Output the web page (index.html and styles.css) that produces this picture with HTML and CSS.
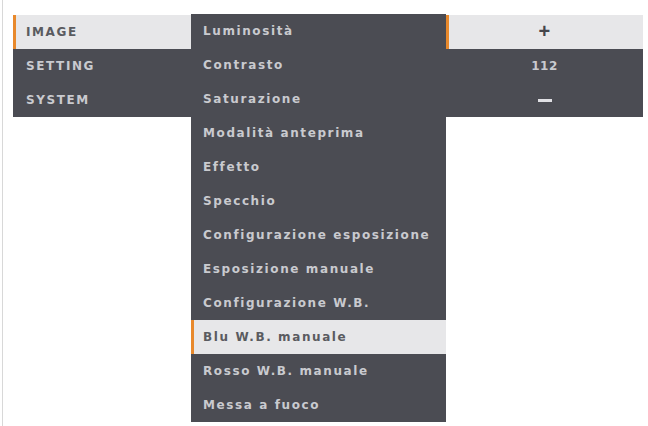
FILE: index.html
```html
<!DOCTYPE html>
<html>
<head>
<meta charset="utf-8">
<link rel="stylesheet" href="styles.css">
</head>
<body>
<div class="frame">
  <div class="osd">
    <ul class="menu main">
      <li class="item active">IMAGE</li>
      <li class="item">SETTING</li>
      <li class="item">SYSTEM</li>
    </ul>
    <ul class="menu sub">
      <li class="item">Luminosità</li>
      <li class="item">Contrasto</li>
      <li class="item">Saturazione</li>
      <li class="item">Modalità anteprima</li>
      <li class="item">Effetto</li>
      <li class="item">Specchio</li>
      <li class="item">Configurazione esposizione</li>
      <li class="item">Esposizione manuale</li>
      <li class="item">Configurazione W.B.</li>
      <li class="item active">Blu W.B. manuale</li>
      <li class="item">Rosso W.B. manuale</li>
      <li class="item">Messa a fuoco</li>
    </ul>
    <ul class="menu value">
      <li class="item active"><span class="plus">+</span></li>
      <li class="item">112</li>
      <li class="item"><span class="minus"></span></li>
    </ul>
  </div>
</div>
</body>
</html>
```
FILE: styles.css
```css
html, body {
  margin: 0;
  padding: 0;
  background: #ffffff;
}
.frame {
  width: 648px;
  height: 426px;
  box-sizing: border-box;
  border-left: 1px solid #d8d8d8;
  margin-left: 2px;
  padding: 14px 0 0 10px;
  overflow: hidden;
}
.osd {
  display: flex;
  align-items: flex-start;
}
.menu {
  list-style: none;
  margin: 0;
  padding: 0;
  background: #4b4c53;
}
.item {
  height: 34px;
  box-sizing: border-box;
  display: flex;
  align-items: center;
  font-family: "DejaVu Sans", "Liberation Sans", sans-serif;
  font-weight: bold;
  font-size: 12px;
  letter-spacing: 1.6px;
  color: #c9cacf;
  border-left: 3px solid transparent;
  white-space: nowrap;
}
.item.active {
  background: #e7e7e9;
  color: #5a5b60;
  border-left-color: #e8892c;
}
.main {
  width: 178px;
  margin-top: 1px;
}
.main .item {
  padding-left: 10px;
}
.sub {
  width: 255px;
}
.sub .item {
  padding-left: 9px;
}
.value {
  width: 197px;
  margin-top: 1px;
}
.value .item {
  justify-content: center;
  padding-right: 3px;
  font-size: 12px;
  letter-spacing: 0.5px;
}
.plus {
  font-family: "Liberation Sans", sans-serif;
  font-size: 20px;
  font-weight: bold;
  color: #45464c;
  line-height: 1;
  margin-top: -2px;
}
.minus {
  display: block;
  width: 14px;
  height: 3px;
  background: #e0e0e4;
}
```
